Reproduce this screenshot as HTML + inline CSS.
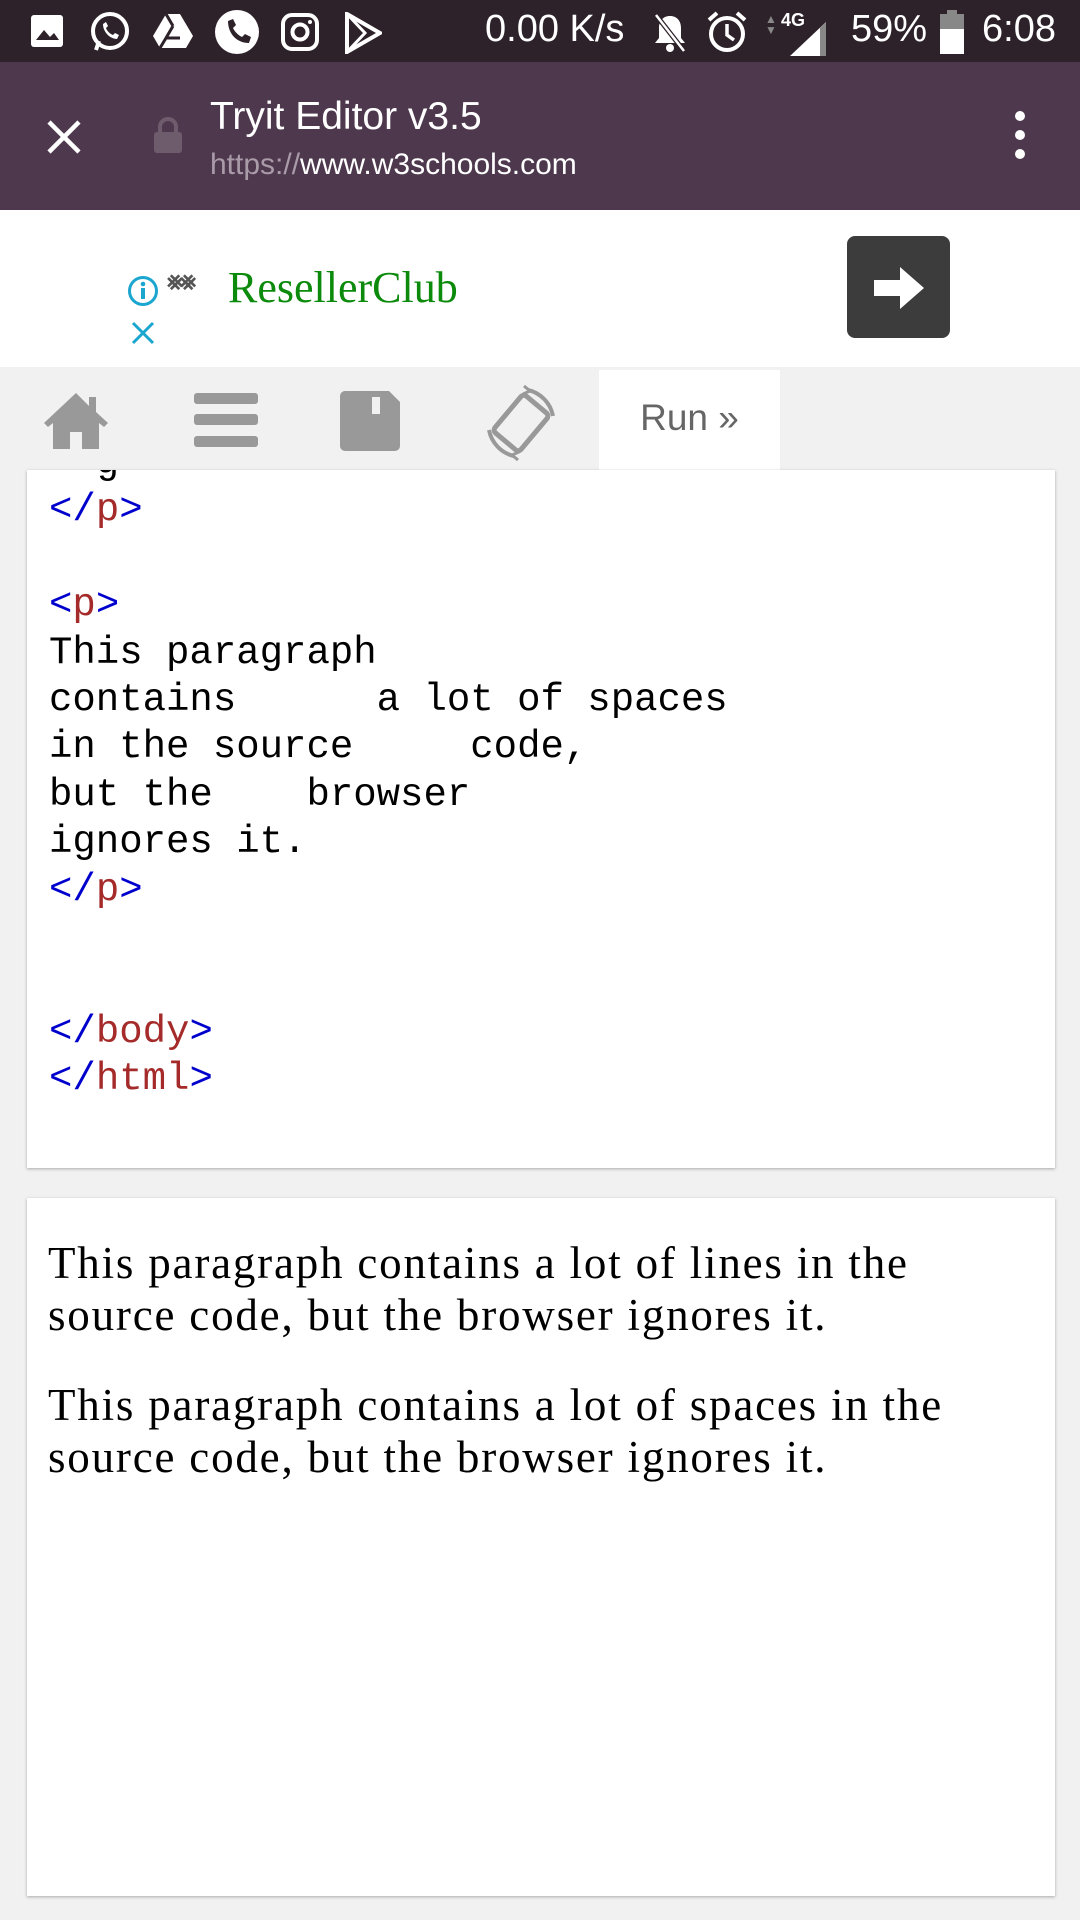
<!DOCTYPE html>
<html><head><meta charset="utf-8"><style>
*{margin:0;padding:0;box-sizing:border-box}
body{width:1080px;height:1920px;background:#f1f1f1;position:relative;overflow:hidden;font-family:"Liberation Sans",sans-serif}
.abs{position:absolute}
#status{left:0;top:0;width:1080px;height:62px;background:#2d2229;color:#fff}
#tb{left:0;top:62px;width:1080px;height:148px;background:#4e384d}
#ad{left:0;top:210px;width:1080px;height:157px;background:#fff}
#tabs{left:0;top:367px;width:1080px;height:103px;background:#f1f1f1}
.panel{background:#fff;box-shadow:0 1px 3px rgba(0,0,0,.3)}
pre{font-family:"Liberation Mono",monospace;font-size:39px;line-height:47.4px;color:#000}
.b{color:#0000cd}.r{color:#a52a2a}
.out p{font-family:"Liberation Serif",serif;font-size:45px;letter-spacing:1.8px;line-height:51.5px;color:#000;margin-bottom:39px;white-space:nowrap}
</style></head><body>
<div id="status" class="abs">
  <svg class="abs" style="left:30px;top:14px" width="34" height="34" viewBox="0 0 34 34"><rect x="1" y="1" width="32" height="32" rx="3" fill="#fff"/><path d="M6 26l8-10 6 7 4-4 5 7z" fill="#2d2229"/></svg>
  <svg class="abs" style="left:88px;top:10px" width="44" height="44" viewBox="0 0 44 44"><circle cx="22" cy="21" r="17" fill="none" stroke="#fff" stroke-width="4"/><path d="M8 40l3-9" stroke="#fff" stroke-width="4"/><path d="M15 14c0 8 7 15 14 15l2-4-4-2-2 2c-3-1-6-4-7-7l2-2-2-4z" fill="#fff"/></svg>
  <svg class="abs" style="left:152px;top:12px" width="42" height="38" viewBox="0 0 42 38"><path d="M14 2h14l13 22-7 12H8L1 24z" fill="#fff"/><path d="M14 2l7 12M21 14L14 26h14M8 36l6-10" stroke="#2d2229" stroke-width="3" fill="none"/></svg>
  <svg class="abs" style="left:214px;top:9px" width="46" height="46" viewBox="0 0 46 46"><circle cx="23" cy="23" r="22" fill="#fff"/><path d="M14 12c0 13 9 22 21 22l2-6-6-3-3 3c-4-2-7-5-9-9l3-3-3-6z" fill="#2d2229"/></svg>
  <svg class="abs" style="left:280px;top:12px" width="40" height="40" viewBox="0 0 40 40"><rect x="3" y="3" width="34" height="34" rx="9" fill="none" stroke="#fff" stroke-width="4"/><circle cx="20" cy="20" r="7.5" fill="none" stroke="#fff" stroke-width="4"/><circle cx="30" cy="10" r="2" fill="#fff"/></svg>
  <svg class="abs" style="left:344px;top:12px" width="38" height="42" viewBox="0 0 38 42"><path d="M3 2l33 19L3 40z" fill="none" stroke="#fff" stroke-width="4"/><path d="M3 2l18 19L3 40" fill="none" stroke="#fff" stroke-width="3"/></svg>
  <div class="abs" style="left:485px;top:8px;font-size:38px">0.00 K/s</div>
  <svg class="abs" style="left:652px;top:12px" width="36" height="42" viewBox="0 0 36 42"><path d="M18 4c-7 0-11 5-11 12v10l-4 5h30l-4-5V16C29 9 25 4 18 4z" fill="#fff"/><circle cx="18" cy="36" r="4" fill="#fff"/><path d="M4 3l28 36" stroke="#2d2229" stroke-width="5"/><path d="M4 3l28 36" stroke="#fff" stroke-width="2.5"/></svg>
  <svg class="abs" style="left:706px;top:10px" width="42" height="44" viewBox="0 0 42 44"><circle cx="21" cy="24" r="16" fill="none" stroke="#fff" stroke-width="4"/><path d="M21 14v11l7 5" stroke="#fff" stroke-width="3.5" fill="none"/><path d="M3 10l8-7M39 10l-8-7" stroke="#fff" stroke-width="4"/></svg>
  <div class="abs" style="left:765px;top:14px;font-size:12px;color:#888;line-height:11px">▲<br>▼</div>
  <div class="abs" style="left:781px;top:10px;font-size:18px;font-weight:bold">4G</div>
  <svg class="abs" style="left:790px;top:22px" width="40" height="34" viewBox="0 0 40 34"><path d="M0 34L36 0v34z" fill="#fff"/><path d="M30 6v28h6V0z" fill="#888"/></svg>
  <div class="abs" style="left:851px;top:8px;font-size:38px">59%</div>
  <svg class="abs" style="left:940px;top:10px" width="24" height="44" viewBox="0 0 24 44"><rect x="7" y="0" width="10" height="5" fill="#888"/><rect x="0" y="4" width="24" height="40" fill="#888"/><rect x="0" y="19" width="24" height="25" fill="#fff"/></svg>
  <div class="abs" style="left:982px;top:8px;font-size:38px">6:08</div>
</div>
<div id="tb" class="abs">
  <svg class="abs" style="left:46px;top:57px" width="36" height="36" viewBox="0 0 36 36"><path d="M3 3l30 30M33 3L3 33" stroke="#fff" stroke-width="4.5"/></svg>
  <svg class="abs" style="left:153px;top:55px" width="30" height="36" viewBox="0 0 30 36"><path d="M7 16v-6a8 8 0 0 1 16 0v6" stroke="#6e5c6d" stroke-width="4" fill="none"/><rect x="1" y="15" width="28" height="21" rx="3" fill="#6e5c6d"/></svg>
  <div class="abs" style="left:210px;top:33px;font-size:39px;color:#fff">Tryit Editor v3.5</div>
  <div class="abs" style="left:210px;top:86px;font-size:30px;color:#a99ba8">https://<span style="color:#fff">www.w3schools.com</span></div>
  <svg class="abs" style="left:1010px;top:49px" width="20" height="50" viewBox="0 0 20 50"><circle cx="10" cy="5" r="5" fill="#fff"/><circle cx="10" cy="24" r="5" fill="#fff"/><circle cx="10" cy="43" r="5" fill="#fff"/></svg>
</div>
<div id="ad" class="abs">
  <svg class="abs" style="left:127px;top:65px" width="32" height="32" viewBox="0 0 32 32"><circle cx="16" cy="16" r="13.5" fill="none" stroke="#1ba6d0" stroke-width="3"/><rect x="14" y="13" width="4" height="11" fill="#1ba6d0"/><circle cx="16" cy="9" r="2.3" fill="#1ba6d0"/></svg>
  <svg class="abs" style="left:130px;top:110px" width="26" height="26" viewBox="0 0 26 26"><path d="M3 3l20 20M23 3L3 23" stroke="#1ba6d0" stroke-width="3"/></svg>
  <div class="abs" style="left:167px;top:55px;font-size:26px;color:#555;font-weight:bold;letter-spacing:-3px">⨳⨳</div>
  <div class="abs" style="left:228px;top:52px;font-size:44px;color:#0b8a0b;font-family:'Liberation Serif',serif">ResellerClub</div>
  <div class="abs" style="left:847px;top:26px;width:103px;height:102px;background:#3c3c3c;border-radius:8px"></div>
  <svg class="abs" style="left:872px;top:55px" width="54" height="46" viewBox="0 0 54 46"><path d="M2 15h26V2l24 21-24 21V31H2z" fill="#fff"/></svg>
</div>
<div id="tabs" class="abs">
  <svg class="abs" style="left:42px;top:24px" width="68" height="58" viewBox="0 0 68 58"><path d="M34 2L2 32l4 4 5-4v26h17V41h12v17h17V32l5 4 4-4-12-11V6h-7v9z" fill="#999"/></svg>
  <svg class="abs" style="left:194px;top:26px" width="64" height="54" viewBox="0 0 64 54"><rect x="0" y="0" width="64" height="11" rx="3" fill="#999"/><rect x="0" y="21" width="64" height="11" rx="3" fill="#999"/><rect x="0" y="43" width="64" height="11" rx="3" fill="#999"/></svg>
  <svg class="abs" style="left:340px;top:24px" width="60" height="60" viewBox="0 0 60 60"><path d="M5 0h44l11 11v44a5 5 0 0 1-5 5H5a5 5 0 0 1-5-5V5a5 5 0 0 1 5-5z" fill="#999"/><rect x="32" y="6" width="8" height="17" fill="#f1f1f1"/></svg>
  <svg class="abs" style="left:484px;top:18px" width="74" height="76" viewBox="0 0 74 76"><rect x="20" y="14" width="34" height="48" rx="4" transform="rotate(40 37 38)" fill="none" stroke="#999" stroke-width="5"/><path d="M44 5a33 33 0 0 1 25 26M30 71A33 33 0 0 1 5 45" fill="none" stroke="#999" stroke-width="4"/><path d="M40 1l6 5-7 3M34 75l-6-5 7-3" fill="none" stroke="#999" stroke-width="3"/></svg>
  <div class="abs" style="left:599px;top:3px;width:181px;height:100px;background:#fff;color:#666;font-size:37px;text-align:center;line-height:96px">Run »</div>
</div>
<div class="abs panel" style="left:27px;top:470px;width:1028px;height:698px;overflow:hidden">
<pre style="position:absolute;left:22px;top:-30px">  g
<span class="b">&lt;/</span><span class="r">p</span><span class="b">&gt;</span>

<span class="b">&lt;</span><span class="r">p</span><span class="b">&gt;</span>
This paragraph
contains      a lot of spaces
in the source     code,
but the    browser
ignores it.
<span class="b">&lt;/</span><span class="r">p</span><span class="b">&gt;</span>


<span class="b">&lt;/</span><span class="r">body</span><span class="b">&gt;</span>
<span class="b">&lt;/</span><span class="r">html</span><span class="b">&gt;</span></pre>
</div>
<div class="abs panel out" style="left:27px;top:1198px;width:1028px;height:698px;padding:40px 21px">
<p>This paragraph contains a lot of lines in the<br>source code, but the browser ignores it.</p>
<p>This paragraph contains a lot of spaces in the<br>source code, but the browser ignores it.</p>
</div>
</body></html>
